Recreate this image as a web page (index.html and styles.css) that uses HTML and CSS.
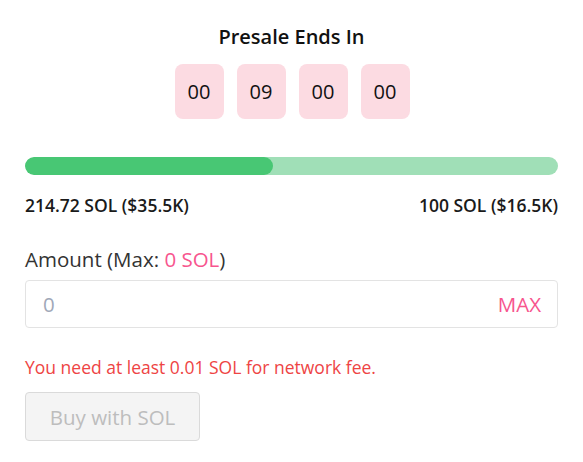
FILE: index.html
```html
<!DOCTYPE html>
<html>
<head>
<meta charset="utf-8">
<link rel="stylesheet" href="styles.css">
</head>
<body>
<div class="card">
  <div class="title">Presale Ends In</div>
  <div class="timer">
    <div class="cell">00</div>
    <div class="cell">09</div>
    <div class="cell">00</div>
    <div class="cell">00</div>
  </div>
  <div class="bar"><div class="fill" style="width: 46.5%"></div></div>
  <div class="stats">
    <span>214.72 SOL ($35.5K)</span>
    <span>100 SOL ($16.5K)</span>
  </div>
  <div class="label">Amount (Max: <span class="pink">0 SOL</span>)</div>
  <div class="input">
    <span class="placeholder">0</span>
    <span class="max">MAX</span>
  </div>
  <div class="error">You need at least 0.01 SOL for network fee.</div>
  <button class="buy">Buy with SOL</button>
</div>
</body>
</html>
```
FILE: styles.css
```css
html, body {
  margin: 0;
  padding: 0;
  background: #ffffff;
}
body {
  font-family: "Open Sans", "Noto Sans", sans-serif;
  color: #111;
}
.card {
  padding: 24px 25px 0 25px;
  display: flex;
  flex-direction: column;
}
.title {
  text-align: center;
  font-size: 20px;
  font-weight: 600;
  line-height: 26px;
  color: #111;
}
.timer {
  display: flex;
  justify-content: center;
  gap: 13px;
  margin-top: 14px;
  padding-left: 1px;
}
.cell {
  width: 49px;
  height: 55px;
  border-radius: 8px;
  background: #fcdbe2;
  display: flex;
  align-items: center;
  justify-content: center;
  font-size: 20px;
  color: #111;
}
.bar {
  margin-top: 38px;
  height: 18px;
  border-radius: 9px;
  background: #a0dfb7;
  overflow: hidden;
}
.fill {
  height: 100%;
  border-radius: 9px;
  background: #48c774;
}
.stats {
  display: flex;
  justify-content: space-between;
  margin-top: 19px;
  font-size: 17.5px;
  font-weight: 600;
  line-height: 22px;
  color: #1a1a1a;
}
.label {
  margin-top: 30px;
  font-size: 20.5px;
  line-height: 26px;
  color: #333;
}
.pink {
  color: #f7558e;
}
.input {
  margin-top: 8px;
  height: 46px;
  border: 1px solid #e3e3e3;
  border-radius: 4px;
  display: flex;
  align-items: center;
  justify-content: space-between;
  padding: 0 16px 0 17px;
  font-size: 20.5px;
}
.placeholder {
  color: #a0a8b8;
}
.max {
  color: #f7558e;
}
.error {
  margin-top: 28px;
  font-size: 17.5px;
  line-height: 22px;
  color: #ee4444;
}
.buy {
  margin-top: 14px;
  align-self: flex-start;
  width: 175px;
  height: 49px;
  background: #f4f4f4;
  border: 1px solid #dadada;
  border-radius: 4px;
  font-family: inherit;
  font-size: 20.5px;
  color: #bdbdbd;
  padding: 0;
}
```
